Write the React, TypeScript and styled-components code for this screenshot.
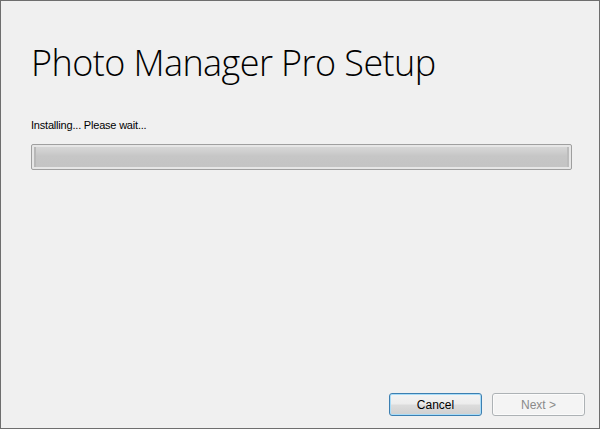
import React from "react";
import styled, { createGlobalStyle } from "styled-components";

const Global = createGlobalStyle`
  html, body { margin: 0; padding: 0; width: 600px; height: 429px; overflow: hidden; background: #f0f0f0; }
  * { box-sizing: border-box; }
`;

const Window = styled.div`
  width: 600px;
  height: 429px;
  border: 1px solid #6e6e6e;
  background: #f0f0f0;
  display: flex;
  flex-direction: column;
  padding: 0 14px 12px 30px;
`;

const Title = styled.h1`
  margin: 37px 0 0 0;
  font-family: "Open Sans", "Segoe UI", sans-serif;
  font-weight: 300;
  font-size: 36px;
  line-height: 50px;
  color: #000;
  letter-spacing: -0.58px;
`;

const Status = styled.div`
  margin-top: 30px;
  font-family: "Liberation Sans", Arial, sans-serif;
  font-size: 11px;
  line-height: 14px;
  letter-spacing: -0.2px;
  color: #000;
`;

const Track = styled.div`
  margin-top: 12px;
  width: 541px;
  height: 26px;
  border: 1px solid #9f9f9f;
  border-radius: 2px;
  background: #e6e6e6;
  padding: 2px;
`;

const Fill = styled.div`
  height: 100%;
  background: linear-gradient(to bottom, #d6d6d6 0%, #d0d0d0 20%, #c6c6c6 45%, #c4c4c4 100%);
  border-left: 2px solid #b8b8b8;
  border-right: 2px solid #bcbcbc;
`;

const Spacer = styled.div`
  flex: 1;
`;

const Footer = styled.div`
  display: flex;
  justify-content: flex-end;
  gap: 10px;
`;

const Button = styled.button<{ $primary?: boolean }>`
  width: 93px;
  height: 23px;
  font-family: "Liberation Sans", Arial, sans-serif;
  font-size: 12px;
  padding: 0;
  border-radius: 3px;
  border: 1px solid ${(p) => (p.$primary ? "#3c7fb1" : "#adb2b5")};
  color: ${(p) => (p.$primary ? "#000" : "#8a8a8a")};
  background: ${(p) =>
    p.$primary
      ? "linear-gradient(to bottom, #f4f4f4 0%, #ececec 48%, #dcdcdc 52%, #d0d0d0 100%)"
      : "#f4f4f4"};
  box-shadow: ${(p) => (p.$primary ? "inset 0 0 0 1px #a8dcf8" : "inset 0 0 0 1px #fbfbfb")};
`;

export default function App() {
  return (
    <>
      <Global />
      <Window>
        <Title>Photo Manager Pro Setup</Title>
        <Status>Installing... Please wait...</Status>
        <Track>
          <Fill />
        </Track>
        <Spacer />
        <Footer>
          <Button $primary>Cancel</Button>
          <Button disabled>Next &gt;</Button>
        </Footer>
      </Window>
    </>
  );
}
